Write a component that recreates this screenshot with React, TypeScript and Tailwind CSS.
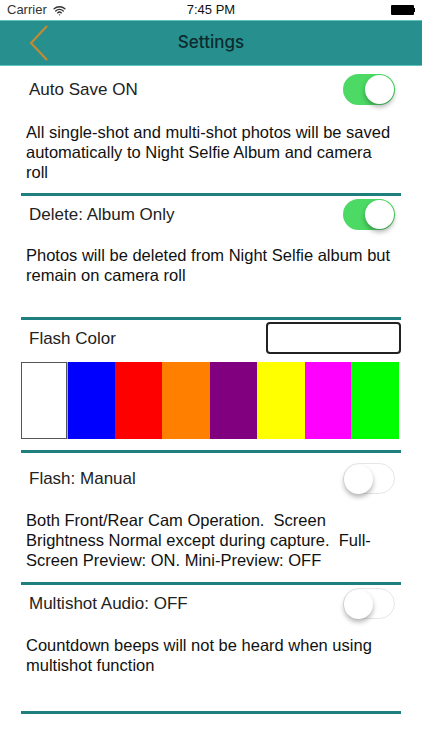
import { Wifi } from "lucide-react";

function Toggle({ on }: { on: boolean }) {
  return (
    <div
      className={`relative h-[31px] w-[52px] shrink-0 rounded-full ${
        on ? "bg-[#4cd964]" : "bg-white border border-[#e6e6e6]"
      }`}
    >
      <div
        className={`absolute top-[1px] h-[29px] w-[29px] rounded-full bg-white shadow-[0_3px_5px_rgba(0,0,0,0.3)] ${
          on ? "right-[1px]" : "left-0"
        }`}
      />
    </div>
  );
}

function Rule() {
  return <div className="mx-[21px] h-[3px] shrink-0 bg-[#1f7f7f]" />;
}

function Row({ label, on, height, gap, desc }: { label: string; on: boolean; height: string; gap: string; desc: string }) {
  return (
    <section className={`flex flex-col ${height}`}>
      <div className="flex h-[31px] items-center justify-between pl-[29px] pr-[27px]">
        <span className="text-[17px] text-[#222]">{label}</span>
        <Toggle on={on} />
      </div>
      <p className={`whitespace-pre pl-[26px] text-[16.5px] leading-[20px] text-[#111] ${gap}`}>{desc}</p>
    </section>
  );
}

export default function App() {
  return (
    <div className="h-[750px] w-[422px] overflow-hidden bg-white font-['Liberation_Sans',sans-serif]">
      {/* status bar */}
      <div className="flex h-[20px] items-center justify-between pl-[7px] pr-[7px] text-[13px] text-[#333]">
        <div className="flex w-[120px] items-center gap-[6px]">
          <span>Carrier</span>
          <Wifi size={13} strokeWidth={2.5} />
        </div>
        <span className="font-medium text-[#111]">7:45 PM</span>
        <div className="flex w-[120px] items-center justify-end">
          <div className="h-[10px] w-[23px] rounded-[1px] bg-black" />
          <div className="h-[4px] w-[1px] bg-black" />
        </div>
      </div>

      {/* nav bar */}
      <header className="relative flex h-[46px] items-center justify-center border-y border-y-[#5fc4c0] bg-[#27908f]">
        <svg className="absolute left-[29px] top-[4px]" width="20" height="36" viewBox="0 0 20 36" fill="none" stroke="#c98a2e" strokeWidth="2">
          <polyline points="18,1 2,18 18,35" />
        </svg>
        <h1 className="font-['Inter',sans-serif] text-[17px] font-medium text-[#0d2b2e]">Settings</h1>
      </header>

      <div className="flex flex-col pt-[8px]">
        <Row
          label="Auto Save ON"
          on
          height="h-[119px]"
          gap="mt-[17px]"
          desc={"All single-shot and multi-shot photos will be saved\nautomatically to Night Selfie Album and camera\nroll"}
        />
        <Rule />
        <div className="h-[3px]" />
        <Row
          label="Delete: Album Only"
          on
          height="h-[118px]"
          gap="mt-[15px]"
          desc={"Photos will be deleted from Night Selfie album but\nremain on camera roll"}
        />
        <Rule />

        {/* flash colour */}
        <section className="h-[130px] pt-[2px]">
          <div className="flex h-[32px] items-center justify-between pl-[29px] pr-[21px]">
            <span className="pt-[1px] text-[17px] text-[#222]">Flash Color</span>
            <div className="h-[32px] w-[135px] rounded-[4px] border-2 border-[#222] bg-white" />
          </div>
          <div className="ml-[21px] mt-[8px] flex h-[77px] w-[378px]">
            <div className="w-[46px] border border-[#555] bg-white" />
            <div className="w-[1px] bg-[#aaa]" />
            <div className="w-[47px] bg-[#0000ff]" />
            <div className="w-[47px] bg-[#ff0000]" />
            <div className="w-[48px] bg-[#ff8000]" />
            <div className="w-[47px] bg-[#800080]" />
            <div className="w-[48px] bg-[#ffff00]" />
            <div className="w-[46px] bg-[#ff00ff]" />
            <div className="w-[48px] bg-[#00ff00]" />
          </div>
        </section>
        <Rule />
        <div className="h-[10px]" />
        <Row
          label="Flash: Manual"
          on={false}
          height="h-[119px]"
          gap="mt-[16px]"
          desc={"Both Front/Rear Cam Operation.  Screen\nBrightness Normal except during capture.  Full-\nScreen Preview: ON. Mini-Preview: OFF"}
        />
        <Rule />
        <div className="h-[3px]" />
        <Row
          label="Multishot Audio: OFF"
          on={false}
          height="h-[123px]"
          gap="mt-[16px]"
          desc={"Countdown beeps will not be heard when using\nmultishot function"}
        />
        <Rule />
      </div>
    </div>
  );
}
